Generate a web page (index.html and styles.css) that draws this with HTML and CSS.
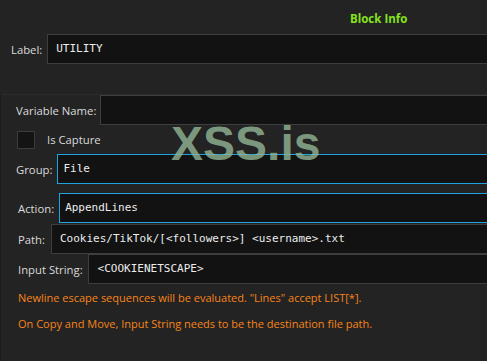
FILE: index.html
```html
<!DOCTYPE html>
<html lang="en">
<head>
    <meta charset="UTF-8">
    <meta name="viewport" content="width=device-width, initial-scale=1.0">
    <title>Block Info</title>
    <link rel="stylesheet" href="styles.css">
</head>
<body>
    <div class="page">
        <div class="header">Block Info</div>

        <div class="row row-label">
            <span class="lbl">Label:</span>
            <div class="field">UTILITY</div>
        </div>

        <div class="panel">
            <div class="row row-var">
                <span class="lbl">Variable Name:</span>
                <div class="field"></div>
            </div>

            <div class="check-row">
                <span class="checkbox"></span>
                <span class="lbl">Is Capture</span>
            </div>

            <div class="row row-group">
                <span class="lbl">Group:</span>
                <div class="field active">File</div>
            </div>

            <div class="row row-action">
                <span class="lbl">Action:</span>
                <div class="field active">AppendLines</div>
            </div>

            <div class="row row-path">
                <span class="lbl">Path:</span>
                <div class="field">Cookies/TikTok/[&lt;followers&gt;] &lt;username&gt;.txt</div>
            </div>

            <div class="row row-input">
                <span class="lbl">Input String:</span>
                <div class="field">&lt;COOKIENETSCAPE&gt;</div>
            </div>

            <div class="notes">
                <p>Newline escape sequences will be evaluated. "Lines" accept LIST[*].</p>
                <p>On Copy and Move, Input String needs to be the destination file path.</p>
            </div>

            <div class="watermark">XSS.is</div>
        </div>
    </div>
</body>
</html>
```

FILE: styles.css
```css
body {
    margin: 0;
    background: #232323;
    font-family: "Open Sans", "Noto Sans", sans-serif;
    overflow: hidden;
}
.page {
    height: 361px;
}
.header {
    height: 34px;
    padding-left: 350px;
    box-sizing: border-box;
    padding-top: 11px;
    color: #84e21e;
    font-weight: bold;
    font-size: 11.5px;
    line-height: 16px;
}
.row {
    display: flex;
    align-items: center;
    height: 30px;
}
.lbl {
    color: #dadada;
    font-size: 11.3px;
    margin-right: 5px;
    white-space: nowrap;
}
.field {
    flex: 1;
    height: 30px;
    box-sizing: border-box;
    background: #121212;
    border: 1px solid #3e3e3e;
    border-right: none;
    color: #ececec;
    font-family: "DejaVu Sans Mono", "Liberation Mono", monospace;
    font-size: 11px;
    line-height: 28px;
    padding-left: 8px;
}
.field.active {
    border-color: #1ca3e0;
    padding-left: 5px;
}
.row-label {
    padding-left: 11px;
}
.panel {
    position: relative;
    margin-top: 30px;
    border-top: 1px solid #2c2c2c;
    border-left: 1px solid #1b1b1b;
    height: 280px;
}
.row-var {
    padding-left: 15px;
}
.row-var .lbl {
    margin-right: 4px;
}
.check-row {
    display: flex;
    align-items: center;
    height: 18px;
    margin-top: 6px;
    padding-left: 16px;
}
.check-row .lbl {
    margin-top: -2px;
}
.checkbox {
    width: 18px;
    height: 18px;
    box-sizing: border-box;
    background: #141414;
    border: 1px solid #3c3c3c;
    margin-right: 12px;
}
.row-group {
    margin-top: 5px;
    padding-left: 15px;
}
.row-action {
    margin-top: 9px;
    padding-left: 17px;
}
.row-path {
    margin-top: 1px;
    padding-left: 17px;
}
.row-path .lbl {
    margin-right: 6px;
}
.row-path .field {
    padding-left: 8px;
}
.row-input {
    padding-left: 17px;
}
.row-input .field {
    padding-left: 9px;
}
.notes {
    padding-left: 17px;
    padding-top: 6px;
}
.notes p {
    margin: 0 0 10px;
    color: #f7831a;
    font-size: 11px;
    line-height: 16px;
}
.watermark {
    position: absolute;
    left: 170px;
    top: 21px;
    font-family: "Liberation Sans", Arial, sans-serif;
    font-weight: bold;
    font-size: 48px;
    line-height: 56px;
    color: rgba(148, 184, 151, 0.8);
    pointer-events: none;
}
```
